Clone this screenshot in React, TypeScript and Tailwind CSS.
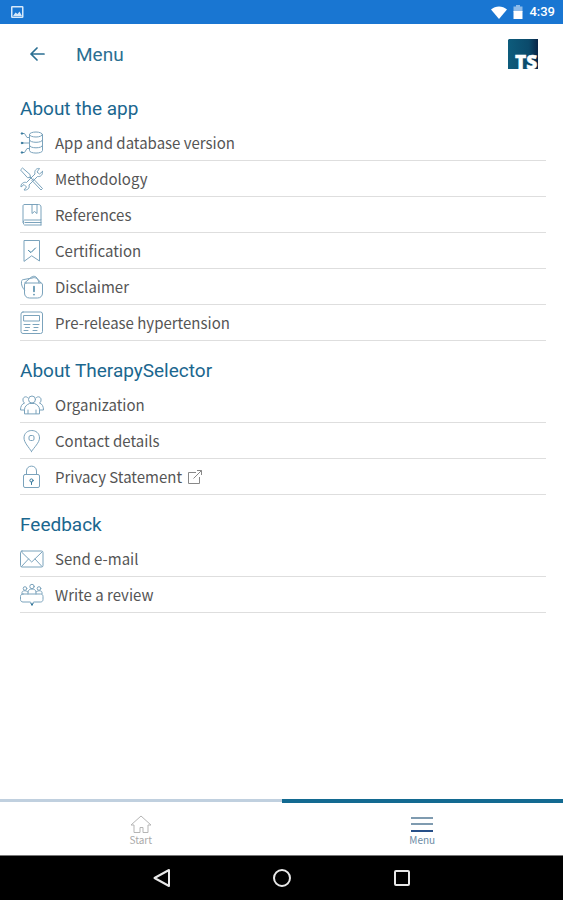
import type { ReactNode } from 'react';

function Icon({ children }: { children: ReactNode }) {
  return (
    <svg
      viewBox="0 0 24 24"
      className="size-6 shrink-0"
      fill="none"
      stroke="#7ba3bc"
      strokeWidth="1"
      strokeLinecap="round"
      strokeLinejoin="round"
      aria-hidden="true"
    >
      {children}
    </svg>
  );
}

const database = (
  <Icon>
    <ellipse cx="16" cy="3.5" rx="6.5" ry="2.5" />
    <path d="M9.5 3.5v16c0 3.4 13 3.4 13 0v-16M9.5 9c0 3.2 13 3.2 13 0M9.5 14.5c0 3.2 13 3.2 13 0" />
    <path d="M2 2.5h2.500l2.500 4h2.500M2 12h7.500M2 21.500h2.500l2.500-4h2.500" />
    <g fill="#35789c" stroke="#35789c">
      <circle cx="2" cy="2.5" r="0.8" />
      <circle cx="2" cy="12" r="0.8" />
      <circle cx="2" cy="21.5" r="0.8" />
    </g>
  </Icon>
);

const tools = (
  <Icon>
    <path d="M1 2.500 2.500 1 10 7.500l.5 3-3 .2L1 3.500z" />
    <path d="m10 10 3 3M13.500 12l9 9.500-1.500 1.500-9-9.500z" />
    <path d="M22.500 4.500 19.500 7 17 5l2.500-3.500C16.500 1 14 3.500 15 7L6.500 15.500C3.500 14.500.5 17 1 20l3-2.500 2.500 2.500L4 23c3.500.5 6-2 5-5l8.500-8.500c3.500.5 5.500-2 5-5z" />
  </Icon>
);

const book = (
  <Icon>
    <path d="M4.500 1.500h14c1.500 0 2.500 1 2.500 2.500v13H4.500C3 17 3 22 4.500 22H21M3 19.500V3c0-1 .5-1.500 1.500-1.500M5 19.500h16M21 17v5" />
    <path d="M12 1.500v9l2.500-2 2.500 2v-9" />
  </Icon>
);

const certificate = (
  <Icon>
    <path d="M4 22V1.500h15.500V22L12 17z" />
    <path d="m8.500 11.500 2.500 2 4.500-4.500" stroke="#35789c" />
  </Icon>
);

const disclaimer = (
  <Icon>
    <path d="M6 8h14.500c1.500 0 2 .5 2 2v8c0 3-2 5-5 5h-8c-3 0-5-2-5-5v-8c0-1.500.5-2 1.500-2z" />
    <path d="M4.500 15C2.500 13 1 9.500 1.500 6.500 1.500 5 3 4.500 4 4.500L12 3M4.500 8l7-6c1.500-1 3-1 4.500 0l5 6M12 3c3.500-1.500 6.500 1 7 5" />
    <path d="M14 11.500v5M14 19.500v.2" strokeWidth="1.4" stroke="#35789c" />
  </Icon>
);

const news = (
  <Icon>
    <rect x="1" y="1" width="21.5" height="21.5" rx="2" />
    <rect x="4" y="4.5" width="15.5" height="5.5" />
    <path d="M4 13.500h6M13 13.500h6M5.500 16.500h4M14 16.500h4M4 19.500h4M13 19.500h4" />
  </Icon>
);

const people = (
  <Icon>
    <circle cx="12" cy="6.5" r="3.5" />
    <path d="M4.500 20.500v-4c0-3 2.500-5 5-6h5c2.500 1 5 3 5 6v4zM8 17v3.500M16 17v3.500" />
    <path d="M8 5C6.500 2.500 2.500 4 3 7c0 1.500.5 2.500 1.500 3C2 11 .5 13 .5 17h4M16 5c1.500-2.500 5.500-1 5 2 0 1.500-.5 2.500-1.500 3 2.500 1 4 3 4 7h-4" />
  </Icon>
);

const pin = (
  <Icon>
    <path d="M11.500 22.500C9 18.500 4 13.500 4 9c0-10 15.500-10 15.500 0 0 4.500-5.500 9.500-8 13.500z" />
    <rect x="9" y="6.5" width="5" height="5" rx="1.5" />
  </Icon>
);

const lock = (
  <Icon>
    <rect x="3.5" y="9.5" width="16" height="13" rx="1.5" />
    <path d="M6.500 9.500V6c0-6.500 10-6.500 10 0v3.500" />
    <path d="M11.500 17v2.500" stroke="#35789c" />
    <circle cx="11.5" cy="15.5" r="1.6" stroke="#35789c" />
  </Icon>
);

const mail = (
  <Icon>
    <rect x="0.5" y="4" width="22.5" height="16" rx="1.5" />
    <path d="m1.500 5 10.200 10L22 5M1.500 19.500l7-7.500M22 19.500l-7-7.500" />
  </Icon>
);

const review = (
  <Icon>
    <path d="M3 11h17.500c1.500 0 2.500 1 2.500 2.500v3c0 1.500-1 2.500-2.500 2.500h-7l-1.500 3-1.500-3H3C1.500 19 .5 18 .5 16.500v-3C.5 12 1.500 11 3 11z" />
    <circle cx="12" cy="3.5" r="2.2" />
    <circle cx="5" cy="5.5" r="1.8" />
    <circle cx="19" cy="5.5" r="1.8" />
    <path d="M8 11V9c0-4 8-4 8 0v2M2 11V9.500C2 7.500 6 7 8 9M22 11V9.500c0-2-4-2.500-6-.5" />
    <path d="m11 20.500 1 2 1-2" stroke="#35789c" />
  </Icon>
);

type Entry = { label: string; icon: ReactNode; external?: boolean };

const sections: { title: string; items: Entry[] }[] = [
  {
    title: 'About the app',
    items: [
      { label: 'App and database version', icon: database },
      { label: 'Methodology', icon: tools },
      { label: 'References', icon: book },
      { label: 'Certification', icon: certificate },
      { label: 'Disclaimer', icon: disclaimer },
      { label: 'Pre-release hypertension', icon: news },
    ],
  },
  {
    title: 'About TherapySelector',
    items: [
      { label: 'Organization', icon: people },
      { label: 'Contact details', icon: pin },
      { label: 'Privacy Statement', icon: lock, external: true },
    ],
  },
  {
    title: 'Feedback',
    items: [
      { label: 'Send e-mail', icon: mail },
      { label: 'Write a review', icon: review },
    ],
  },
];

function StatusBar() {
  return (
    <div className="flex h-6 items-center justify-between bg-[#1976d2] pr-2 pl-2.5 text-white">
      <svg viewBox="0 0 14 14" className="size-3.5" aria-hidden="true">
        <rect x="1.75" y="1.75" width="11" height="10.5" rx="0.5" fill="none" stroke="#d6e8fa" strokeWidth="1.5" />
        <path d="m3 11 2.500-3.500 2 1.500 2-2.500L12 11z" fill="#d6e8fa" />
      </svg>
      <div className="flex items-center gap-1.5">
        <svg viewBox="0 0 16 13" className="h-[13px] w-4" fill="#fff" aria-hidden="true">
          <path d="M0 3.500C4.500-.5 11.500-.5 16 3.500L8 13z" />
        </svg>
        <svg viewBox="0 0 10 14" className="h-3.5 w-2.5" aria-hidden="true">
          <path d="M3 0h4v1.500h2.500V7H.5V1.500H3z" fill="#8ebbe9" />
          <path d="M.5 6h9v8h-9z" fill="#fff" />
        </svg>
        <span className="font-['Roboto',sans-serif] text-[13px] leading-4 font-medium">4:39</span>
      </div>
    </div>
  );
}

function Logo() {
  return (
    <svg viewBox="0 0 32 32" className="size-8 overflow-visible" role="img" aria-label="TherapySelector">
      <defs>
        <linearGradient id="logo-fill" x1="0" y1="0" x2="1" y2="0">
          <stop offset="0" stopColor="#0d5c7c" />
          <stop offset="0.7" stopColor="#0b4a6b" />
          <stop offset="1" stopColor="#0a2547" />
        </linearGradient>
      </defs>
      <path d="M2 0h29v30H1V1z" fill="url(#logo-fill)" />
      <text
        x="8"
        y="30"
        fill="#fff"
        stroke="#fff"
        strokeWidth="0.5"
        fontFamily="Open Sans, sans-serif"
        fontWeight="800"
        fontSize="19"
      >
        TS
      </text>
    </svg>
  );
}

export default function App() {
  return (
    <div className="flex min-h-screen flex-col bg-white font-['Noto_Sans_CJK_SC',sans-serif]">
      <StatusBar />
      <header className="flex items-center px-6 pt-[15px]">
        <button type="button" aria-label="Back" className="flex h-8 items-center pl-1.5">
          <svg
            viewBox="0 0 16 16"
            className="size-4"
            fill="none"
            stroke="#2b6f92"
            strokeWidth="1.7"
            strokeLinecap="round"
            strokeLinejoin="round"
          >
            <path d="M14 7H1M7 1 1 7l6 6" />
          </svg>
        </button>
        <h1 className="ml-[30px] font-['Roboto',sans-serif] text-[19px] leading-6 text-[#2b6f92]">Menu</h1>
        <div className="ml-auto">
          <Logo />
        </div>
      </header>

      <main className="flex-1 pt-[26px] pr-[17px] pl-5">
        {sections.map((section) => (
          <section key={section.title} className="mb-[18px]">
            <h2 className="font-['Roboto',sans-serif] text-[19px] leading-6 text-[#1b678f]">{section.title}</h2>
            <ul className="pt-1">
              {section.items.map((item) => (
                <li key={item.label} className="border-b border-[#dedede]">
                  <a href="#" className="flex h-[35px] items-center gap-[11px] text-[15px] leading-6 text-[#555]">
                    {item.icon}
                    <span>{item.label}</span>
                    {item.external && (
                      <svg
                        viewBox="0 0 16 16"
                        className="-ml-1.5 size-4"
                        fill="none"
                        stroke="#888"
                        strokeWidth="1"
                        aria-hidden="true"
                      >
                        <path d="M9 3.500H1.500v11h11V8M6.500 9.500l8-8M10 1.500h4.500V6" />
                      </svg>
                    )}
                  </a>
                </li>
              ))}
            </ul>
          </section>
        ))}
      </main>

      <nav className="grid grid-cols-2 text-[10px] leading-3">
        <a href="#" className="flex h-14 flex-col items-center border-t-3 border-[#c0d0df] pt-3 text-[#aaa]">
          <svg viewBox="0 0 22 20" className="h-5 w-[22px]" fill="none" stroke="#b5b5b5" aria-hidden="true">
            <path d="M4 11H1L11 2l10 9h-3v7.500h-5v-5h-3v5H4z" />
          </svg>
          <span>Start</span>
        </a>
        <a
          href="#"
          aria-current="page"
          className="flex h-14 flex-col items-center border-t-4 border-[#136a91] pt-[11px] text-[#6d8ba5]"
        >
          <svg viewBox="0 0 22 20" className="h-5 w-[22px]" strokeWidth="2" aria-hidden="true">
            <path d="M0 4h22M0 10h22" stroke="#7f9bb0" />
            <path d="M0 17h22" stroke="#264f88" />
          </svg>
          <span>Menu</span>
        </a>
      </nav>

      <div className="flex h-[45px] items-center justify-center gap-[100px] border-t border-[#777] bg-black">
        <button type="button" aria-label="Back">
          <svg viewBox="0 0 20 20" className="size-5" fill="none" stroke="#e8e8e8" strokeWidth="2">
            <path d="M17 2v16L2.500 10z" strokeLinejoin="round" />
          </svg>
        </button>
        <button type="button" aria-label="Home">
          <svg viewBox="0 0 20 20" className="size-5" fill="none" stroke="#e8e8e8" strokeWidth="2">
            <circle cx="10" cy="10" r="8" />
          </svg>
        </button>
        <button type="button" aria-label="Recent apps">
          <svg viewBox="0 0 20 20" className="size-5" fill="none" stroke="#e8e8e8" strokeWidth="2">
            <rect x="3" y="3" width="14" height="14" rx="1" />
          </svg>
        </button>
      </div>
    </div>
  );
}
